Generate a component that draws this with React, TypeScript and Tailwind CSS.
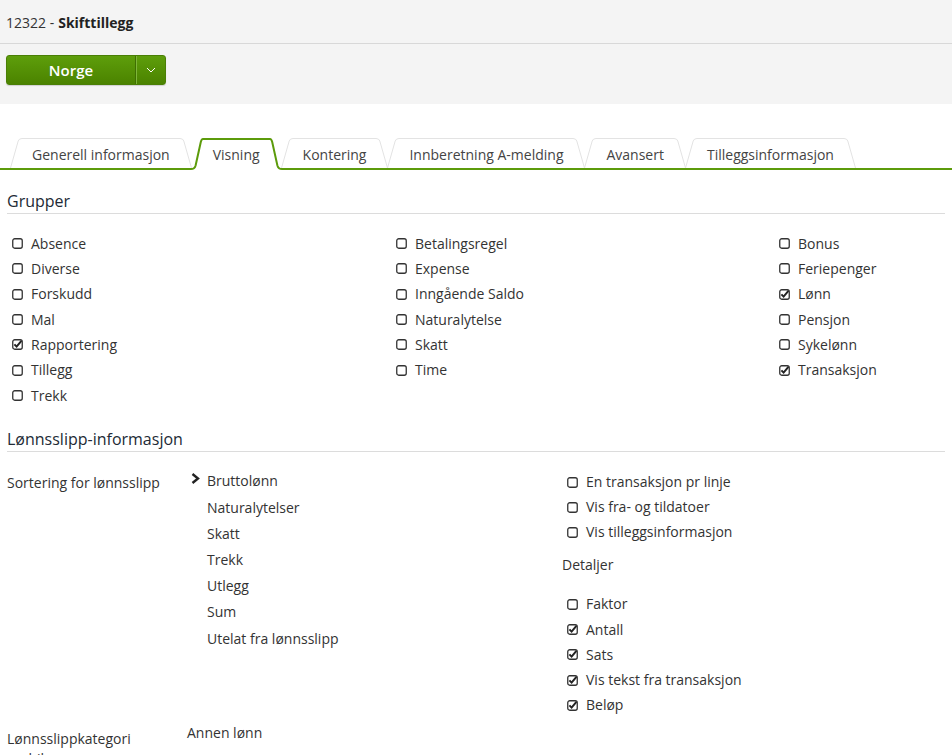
import React from "react";

type Check = { label: string; checked?: boolean };

const groupCols: Check[][] = [
  [
    { label: "Absence" },
    { label: "Diverse" },
    { label: "Forskudd" },
    { label: "Mal" },
    { label: "Rapportering", checked: true },
    { label: "Tillegg" },
    { label: "Trekk" },
  ],
  [
    { label: "Betalingsregel" },
    { label: "Expense" },
    { label: "Inngående Saldo" },
    { label: "Naturalytelse" },
    { label: "Skatt" },
    { label: "Time" },
  ],
  [
    { label: "Bonus" },
    { label: "Feriepenger" },
    { label: "Lønn", checked: true },
    { label: "Pensjon" },
    { label: "Sykelønn" },
    { label: "Transaksjon", checked: true },
  ],
];

const tabs = [
  "Generell informasjon",
  "Visning",
  "Kontering",
  "Innberetning A-melding",
  "Avansert",
  "Tilleggsinformasjon",
];

const sortOrder = [
  "Bruttolønn",
  "Naturalytelser",
  "Skatt",
  "Trekk",
  "Utlegg",
  "Sum",
  "Utelat fra lønnsslipp",
];

const options: Check[] = [
  { label: "En transaksjon pr linje" },
  { label: "Vis fra- og tildatoer" },
  { label: "Vis tilleggsinformasjon" },
];

const details: Check[] = [
  { label: "Faktor" },
  { label: "Antall", checked: true },
  { label: "Sats", checked: true },
  { label: "Vis tekst fra transaksjon", checked: true },
  { label: "Beløp", checked: true },
];

const Box: React.FC<{ checked?: boolean }> = ({ checked }) => (
  <svg width="11" height="11" viewBox="0 0 11 11" className="shrink-0">
    <rect x="0.75" y="0.75" width="9.5" height="9.5" rx="2" fill="white" stroke="#333" strokeWidth="1.3" />
    {checked && (
      <path d="M2.4 5.4 L4.6 7.6 L9.4 1.8" fill="none" stroke="#222" strokeWidth="2" />
    )}
  </svg>
);

const CheckRow: React.FC<{ item: Check; h: string }> = ({ item, h }) => (
  <div className={`flex items-center gap-[8px] ${h}`}>
    <Box checked={item.checked} />
    <span>{item.label}</span>
  </div>
);

const Tab: React.FC<{ label: string; active?: boolean; first?: boolean }> = ({ label, active, first }) => {
  if (active) {
    return (
      <div className="-ml-px -mb-[2px] flex h-[32px]">
        <svg width="12" height="32" viewBox="0 0 12 32">
          <path d="M0 32 L0 30 Q3 30 4 27 L9.2 4 Q10 1 12 1 L12 32 Z" fill="white" />
          <path d="M0 31 Q3.6 31 4.6 27.4 L9.8 4 Q10.5 1 12 1" fill="none" stroke="#5c9b0b" strokeWidth="2" />
        </svg>
        <div className="flex items-start border-t-2 border-[#5c9b0b] bg-white px-[10px] pt-[5px] text-[#444]">
          {label}
        </div>
        <svg width="12" height="32" viewBox="0 0 12 32">
          <path d="M12 32 L12 30 Q9 30 8 27 L2.8 4 Q2 1 0 1 L0 32 Z" fill="white" />
          <path d="M12 31 Q8.4 31 7.4 27.4 L2.2 4 Q1.5 1 0 1" fill="none" stroke="#5c9b0b" strokeWidth="2" />
        </svg>
      </div>
    );
  }
  return (
    <div className={`flex h-[30px] ${first ? "" : "-ml-px"}`}>
      <svg width="12" height="30" viewBox="0 0 12 30">
        <path d="M0.5 30 L8.2 3 Q9 0.5 12 0.5 L12 30 Z" fill="white" />
        <path d="M0.5 30 L8.2 3 Q9 0.5 12 0.5" fill="none" stroke="#e3e3e3" strokeWidth="1" />
      </svg>
      <div className="flex items-start border-t border-[#e3e3e3] bg-white px-[10px] pt-[6px] text-[#444]">
        {label}
      </div>
      <svg width="12" height="30" viewBox="0 0 12 30">
        <path d="M11.5 30 L3.8 3 Q3 0.5 0 0.5 L0 30 Z" fill="white" />
        <path d="M11.5 30 L3.8 3 Q3 0.5 0 0.5" fill="none" stroke="#e3e3e3" strokeWidth="1" />
      </svg>
    </div>
  );
};

const App: React.FC = () => {
  return (
    <div className="min-h-screen bg-white font-['Open_Sans',sans-serif] text-[14px] leading-[20px] text-[#333]">
      <div className="bg-[#f4f4f4]">
        <div className="flex h-[44px] items-center border-b border-[#d8d8d8] px-[6px] pt-[2px]">
          <span>12322 - </span>
          <span className="ml-[4px] font-bold text-[#222]">Skifttillegg</span>
        </div>
        <div className="px-[6px] pb-[19px] pt-[11px]">
          <div className="flex h-[30px] w-[160px] overflow-hidden rounded-[3px] border border-[#4a7f05] bg-gradient-to-b from-[#5e9e0c] to-[#4b8300] text-white shadow-[0_1px_1px_rgba(0,0,0,0.15)]">
            <button className="flex flex-1 items-center justify-center text-[15px] font-semibold">
              Norge
            </button>
            <div className="w-px bg-[#3f6f02]" />
            <div className="w-px bg-[#7fb63a]" />
            <button className="flex w-[28px] items-center justify-center">
              <svg width="10" height="6" viewBox="0 0 10 6">
                <path d="M1 1 L5 5 L9 1" fill="none" stroke="white" strokeWidth="1" />
              </svg>
            </button>
          </div>
        </div>
      </div>

      <div className="pt-[34px]">
        <div className="flex items-end border-b-2 border-[#5c9b0b] pl-[10px]">
          {tabs.map((t, i) => (
            <Tab key={t} label={t} active={i === 1} first={i === 0} />
          ))}
        </div>
      </div>

      <div className="px-[7px]">
        <h2 className="mt-[19px] border-b border-[#dcdcdc] text-[16px] leading-[24px] text-[#222a35]">
          Grupper
        </h2>
        <div className="mt-[17px] grid grid-cols-[384px_383px_1fr] pl-[5px]">
          {groupCols.map((col, i) => (
            <div key={i}>
              {col.map((c) => (
                <CheckRow key={c.label} item={c} h="h-[25.33px]" />
              ))}
            </div>
          ))}
        </div>

        <h2 className="mt-[19px] border-b border-[#dcdcdc] text-[16px] leading-[24px] text-[#222a35]">
          Lønnsslipp-informasjon
        </h2>

        <div className="mt-[16px] grid grid-cols-[180px_375px_1fr]">
          <div className="pt-[5px]">Sortering for lønnsslipp</div>
          <div>
            {sortOrder.map((s, i) => (
              <div key={s} className="flex h-[26.2px] items-center">
                <div className="flex w-[20px] justify-start pb-[5px] pl-[4px]">
                  {i === 0 && (
                    <svg width="9" height="11" viewBox="0 0 9 11">
                      <path d="M1.5 1 L7 5.5 L1.5 10" fill="none" stroke="#222" strokeWidth="2.4" />
                    </svg>
                  )}
                </div>
                <span>{s}</span>
              </div>
            ))}
          </div>
          <div className="pt-[1.5px]">
            <div className="pl-[5px]">
              {options.map((o) => (
                <CheckRow key={o.label} item={o} h="h-[25px]" />
              ))}
            </div>
            <div className="mt-[10.5px]">Detaljer</div>
            <div className="mt-[16.4px] pl-[5px]">
              {details.map((d) => (
                <CheckRow key={d.label} item={d} h="h-[25.25px]" />
              ))}
            </div>
          </div>

          <div className="max-w-[150px] pt-[11px]">Lønnsslippkategori mobil</div>
          <div className="pt-[5px]">Annen lønn</div>
          <div />
        </div>
      </div>
    </div>
  );
};

export default App;
